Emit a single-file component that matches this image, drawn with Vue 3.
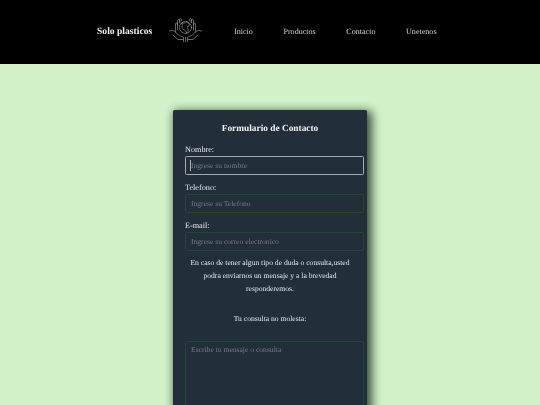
<script setup>
const links = ['Inicio', 'Productos', 'Contacto', 'Unetenos']
</script>

<template>
  <div class="page">
    <header class="top">
      <strong class="brand">Solo plasticos</strong>
      <svg class="logo" viewBox="0 0 33 24" fill="none" stroke="#bdbdbd" stroke-width="0.55" stroke-linecap="round" stroke-linejoin="round">
        <circle cx="16.500" cy="9.500" r="6" />
        <path d="M13 5c2 .5 3 0 4.500-1 1 1 2.500 1 3 3-1 1-2 1-2 2.500s1.500 2 .5 4l-1.500 1.500c-.5-1.500-1-2.500-2-3s-2.500-1-2.500-2.500 1-1.500.5-2.500z" />
        <path d="M.5 13c2.500-1 4.500-.5 6 1l3 3c1 1 3.500 1 5 2.500v4" />
        <path d="M32.500 13c-2.500-1-4.500-.5-6 1l-3 3c-1 1-3.500 1-5 2.500v4" />
        <path d="M4 17l5 4.500h5M29 17l-5 4.500h-5M16.500 19v5" />
        <path d="M6.500 14V6c0-1.500 2-1.500 2 0v6M8.500 7V2.500c0-1.500 2.200-1.500 2.200 0V5M10.700 4V1.500c0-1.300 2-1.300 2 .2V3" />
        <path d="M26.500 14V6c0-1.500-2-1.500-2 0v6M24.500 7V2.500c0-1.500-2.200-1.500-2.200 0V5M22.300 4V1.500c0-1.300-2-1.300-2 .2V3" />
      </svg>
      <nav class="nav">
        <a v-for="link in links" :key="link" class="link">{{ link }}</a>
      </nav>
    </header>

    <main class="main">
      <form class="card" @submit.prevent>
        <h1 class="title">Formulario de Contacto</h1>

        <label class="label" for="nombre">Nombre:</label>
        <div class="field focused" id="nombre"><i class="caret"></i><span>Ingrese su nombre</span></div>

        <label class="label" for="telefono">Telefono:</label>
        <div class="field" id="telefono"><span>Ingrese su Telefono</span></div>

        <label class="label" for="email">E-mail:</label>
        <div class="field" id="email"><span>Ingrese su correo electronico</span></div>

        <p class="copy">En caso de tener algun tipo de duda o consulta,usted podra enviarnos un mensaje y a la brevedad responderemos.</p>
        <p class="ask">Tu consulta no molesta:</p>

        <div class="field area"><span>Escribe tu mensaje o consulta</span></div>
      </form>
    </main>
  </div>
</template>

<style>
html, body { margin: 0; padding: 0; overflow: hidden; background: #d1f1c9; }
</style>

<style scoped>
.page {
  width: 540px;
  height: 405px;
  overflow: hidden;
  background: #d1f1c9;
  font-family: "Liberation Serif", serif;
  text-rendering: geometricPrecision;
  filter: blur(0.3px);
}
.top {
  height: 64px;
  box-sizing: border-box;
  background: #000;
  display: flex;
  align-items: center;
  padding-left: 97px;
}
.brand {
  color: #f0f0f0;
  font-size: 9.6px;
  width: 72px;
  margin-top: -2px;
}
.logo {
  width: 33px;
  height: 24px;
  flex: none;
  margin-top: -4px;
}
.nav {
  display: flex;
  margin-left: 32px;
  margin-top: -2px;
  gap: 30.5px;
}
.link {
  color: #d4d4d4;
  font-size: 8.1px;
}
.main {
  display: flex;
  justify-content: center;
  padding-top: 46px;
}
.card {
  width: 194px;
  height: 400px;
  box-sizing: border-box;
  flex: none;
  padding: 13px 12px 12px;
  background: #232e3b;
  border-radius: 1.5px;
  box-shadow: 3px 3px 10px 2px rgba(10, 25, 15, 0.75);
  display: flex;
  flex-direction: column;
  color: #e6e9eb;
}
.title {
  margin: 0 0 10px;
  height: 12px;
  line-height: 12px;
  font-size: 9.36px;
  font-weight: bold;
  text-align: center;
  color: #f2f2f2;
}
.label {
  font-size: 8.2px;
  line-height: 10px;
  height: 10px;
  margin: 0 0 1px;
}
.field {
  width: 179px;
  height: 19px;
  box-sizing: border-box;
  flex: none;
  border: 1px solid #1b4a2d;
  border-radius: 1.5px;
  padding: 0 5px;
  display: flex;
  align-items: center;
  margin-bottom: 8px;
  color: #747c83;
  font-size: 7.6px;
}
#email {
  margin-bottom: 5px;
}
.focused {
  border-color: #a6abaf;
  position: relative;
}
.caret {
  position: absolute;
  left: 4px;
  top: 3px;
  width: 0.75px;
  height: 11px;
  background: #aeb3b7;
}
.copy {
  margin: 0;
  font-size: 7.6px;
  line-height: 13px;
  text-align: center;
}
.ask {
  margin: 17px 0 0;
  height: 13px;
  font-size: 7.6px;
  line-height: 13px;
  text-align: center;
}
.area {
  height: 100px;
  align-items: flex-start;
  padding-top: 3px;
  margin-top: 16px;
}
</style>
